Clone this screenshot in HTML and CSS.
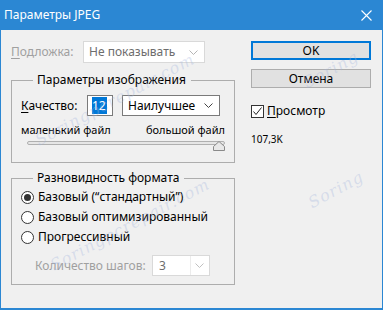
FILE: index.html
```html
<!DOCTYPE html>
<html lang="ru">
<head>
    <meta charset="UTF-8">
    <title>Параметры JPEG</title>
    <link rel="stylesheet" href="styles.css">
</head>
<body>
    <div class="dialog">
        <div class="titlebar">
            <span class="title">Параметры JPEG</span>
            <svg class="close" width="11" height="11" viewBox="0 0 11 11">
                <path d="M0.5 0.5 L10.5 10.5 M10.5 0.5 L0.5 10.5" stroke="#fff" stroke-width="1.1" fill="none"/>
            </svg>
        </div>

        <div class="content">
            <div class="left">
                <!-- Подложка -->
                <div class="matte-row">
                    <span class="label muted"><u>П</u>одложка:</span>
                    <div class="combo disabled matte-combo">
                        <span class="combo-text">Не показывать</span>
                        <svg class="chevron" width="9" height="5" viewBox="0 0 9 5"><path d="M0.5 0.5 L4.5 4.5 L8.5 0.5" stroke="#b5b5b5" fill="none"/></svg>
                    </div>
                </div>

                <!-- Параметры изображения -->
                <fieldset class="group quality-group">
                    <legend>Параметры изображения</legend>
                    <div class="quality-row">
                        <span class="label quality-label"><u>К</u>ачество:</span>
                        <div class="num-field"><span class="selected">12</span></div>
                        <div class="combo quality-combo">
                            <span class="combo-text">Наилучшее</span>
                            <svg class="chevron" width="9" height="5" viewBox="0 0 9 5"><path d="M0.5 0.5 L4.5 4.5 L8.5 0.5" stroke="#444" fill="none"/></svg>
                        </div>
                    </div>
                    <div class="scale-labels">
                        <span>маленький файл</span>
                        <span>большой файл</span>
                    </div>
                    <div class="slider">
                        <div class="track"></div>
                        <svg class="thumb" width="12" height="10" viewBox="0 0 12 10">
                            <path d="M0.5 9.5 L0.5 5.5 L6 0.5 L11.5 5.5 L11.5 9.5 Z" fill="#e8e8e8" stroke="#8a8a8a"/>
                        </svg>
                    </div>
                </fieldset>

                <!-- Разновидность формата -->
                <fieldset class="group format-group">
                    <legend>Разновидность формата</legend>
                    <div class="radio-row"><span class="radio checked"></span>Базовый (“стандартный”)</div>
                    <div class="radio-row"><span class="radio"></span>Базовый оптимизированный</div>
                    <div class="radio-row"><span class="radio"></span>Прогрессивный</div>
                    <div class="steps-row">
                        <span class="label muted steps-label">Количество шагов:</span>
                        <div class="combo disabled steps-combo">
                            <span class="steps-field">3</span>
                            <svg class="chevron" width="9" height="5" viewBox="0 0 9 5"><path d="M0.5 0.5 L4.5 4.5 L8.5 0.5" stroke="#c0c0c0" fill="none"/></svg>
                        </div>
                    </div>
                </fieldset>
            </div>

            <div class="right">
                <button class="btn btn-default">OK</button>
                <button class="btn">Отмена</button>
                <div class="check-row">
                    <span class="checkbox">
                        <svg width="11" height="11" viewBox="0 0 11 11"><path d="M1.5 5.5 L4 8.5 L9.5 1.5" stroke="#222" stroke-width="1" fill="none"/></svg>
                    </span>
                    <span><u>П</u>росмотр</span>
                </div>
                <div class="file-size">107,3K</div>
            </div>
        </div>

        <!-- водяной знак со скриншота -->
        <span class="watermark wm-1">Soringpcrepair.com</span>
        <span class="watermark wm-2">Soringpcrepair.com</span>
        <span class="watermark wm-3">Soring</span>
        <span class="watermark wm-4">Soring</span>
    </div>
</body>
</html>
```

FILE: styles.css
```css
/* Общие стили */
body {
    margin: 0;
    font-family: "Noto Sans", "Open Sans", sans-serif;
    font-size: 12px;
    color: #000;
    background: #fff;
}

/* Окно диалога */
.dialog {
    position: relative;
    width: 383px;
    height: 310px;
    box-sizing: border-box;
    border: 1px solid #2b87d3;
    border-top: none;
    border-bottom-width: 2px;
    background: #f0f0f0;
    overflow: hidden;
}

.titlebar {
    display: flex;
    align-items: center;
    justify-content: space-between;
    height: 30px;
    margin: 0 -1px;
    padding: 0 11px 0 4px;
    background: #2b87d3;
    color: #fff;
}

.title {
    font-size: 12px;
    line-height: 16px;
}

.close {
    display: block;
}

/* Основная часть */
.content {
    display: flex;
    padding: 11px 0 0 10px;
}

.left {
    width: 224px;
}

.right {
    display: flex;
    flex-direction: column;
    width: 120px;
    margin-left: 16px;
}

.label {
    line-height: 16px;
    white-space: nowrap;
}

.muted {
    color: #a0a0a0;
}

u {
    text-decoration-thickness: 1px;
    text-underline-offset: 2px;
}

/* Выпадающие списки */
.combo {
    display: flex;
    align-items: center;
    justify-content: space-between;
    box-sizing: border-box;
    height: 22px;
    padding: 0 6px 0 5px;
    background: #fff;
    border: 1px solid #7a7a7a;
}

.combo.disabled {
    border-color: #d9d9d9;
}

.combo-text {
    line-height: 16px;
}

.chevron {
    display: block;
}

.matte-row {
    display: flex;
    align-items: center;
    height: 22px;
}

.matte-row .label {
    width: 72px;
}

.matte-combo {
    width: 122px;
    color: #6d6d6d;
}

/* Группы */
.group {
    margin: 0;
    border: 1px solid #adadad;
    padding: 0 11px 0 9px;
}

.group legend {
    margin-left: 12px;
    padding: 0 5px 0 4px;
    line-height: 16px;
}

.quality-group {
    margin-top: 9px;
    padding-top: 7px;
    padding-bottom: 9px;
}

.quality-row {
    display: flex;
    align-items: center;
}

.quality-label {
    width: 66px;
}

.num-field {
    box-sizing: border-box;
    width: 26px;
    height: 21px;
    padding: 2px 0 0 4px;
    background: #fff;
    border: 1px solid #7a7a7a;
    line-height: 15px;
}

.selected {
    background: #0078d7;
    color: #fff;
    padding-right: 1px;
}

.quality-combo {
    width: 98px;
    height: 21px;
    margin-left: 9px;
}

.scale-labels {
    display: flex;
    justify-content: space-between;
    margin-top: 6px;
    margin-right: -2px;
    font-size: 11px;
    line-height: 15px;
}

.slider {
    position: relative;
    height: 12px;
    margin: 2px -2px 0 6px;
}

.track {
    margin-top: 4px;
    height: 2px;
    background: #e6e6e6;
    border: 1px solid #b0b0b0;
    border-radius: 2px;
}

.thumb {
    position: absolute;
    right: 0;
    top: 0;
}

.format-group {
    margin-top: 7px;
    padding-top: 1px;
    padding-bottom: 8px;
}

.radio-row {
    display: flex;
    align-items: center;
    height: 20px;
    line-height: 16px;
}

.radio {
    box-sizing: border-box;
    width: 13px;
    height: 13px;
    margin-right: 4px;
    border: 1px solid #333;
    border-radius: 50%;
    background: #fff;
    position: relative;
}

.radio.checked::after {
    content: "";
    position: absolute;
    left: 2px;
    top: 2px;
    width: 7px;
    height: 7px;
    border-radius: 50%;
    background: #333;
}

.steps-row {
    display: flex;
    align-items: center;
    margin-top: 8px;
    margin-left: 14px;
}

.steps-label {
    width: 117px;
}

.steps-combo {
    width: 58px;
    height: 21px;
    padding: 0 5px 0 0;
}

.steps-field {
    box-sizing: border-box;
    height: 19px;
    width: 38px;
    padding-left: 6px;
    line-height: 19px;
    color: #6d6d6d;
    border-right: 1px solid #ececec;
}

/* Кнопки */
.btn {
    box-sizing: border-box;
    width: 120px;
    height: 19px;
    padding: 0;
    font-family: inherit;
    font-size: 12px;
    line-height: 15px;
    color: #000;
    background: #e1e1e1;
    border: 1px solid #adadad;
}

.btn-default {
    border: 2px solid #0078d7;
}

.btn + .btn {
    margin-top: 9px;
}

.check-row {
    display: flex;
    align-items: center;
    margin-top: 15px;
    line-height: 16px;
}

.checkbox {
    box-sizing: border-box;
    display: flex;
    align-items: center;
    justify-content: center;
    width: 13px;
    height: 13px;
    margin-right: 3px;
    border: 1px solid #333;
    background: #fff;
}

.file-size {
    margin-top: 13px;
    font-size: 10px;
    line-height: 14px;
}

/* Водяной знак */
.watermark {
    position: absolute;
    font-family: "DejaVu Serif", serif;
    font-style: italic;
    font-size: 16px;
    letter-spacing: 1px;
    color: rgba(165, 182, 222, 0.35);
    transform: rotate(-28deg);
    white-space: nowrap;
    pointer-events: none;
}

.wm-1 { left: 25px; top: 90px; }
.wm-2 { left: 40px; top: 215px; }
.wm-3 { left: 300px; top: 60px; }
.wm-4 { left: 305px; top: 180px; }
```
